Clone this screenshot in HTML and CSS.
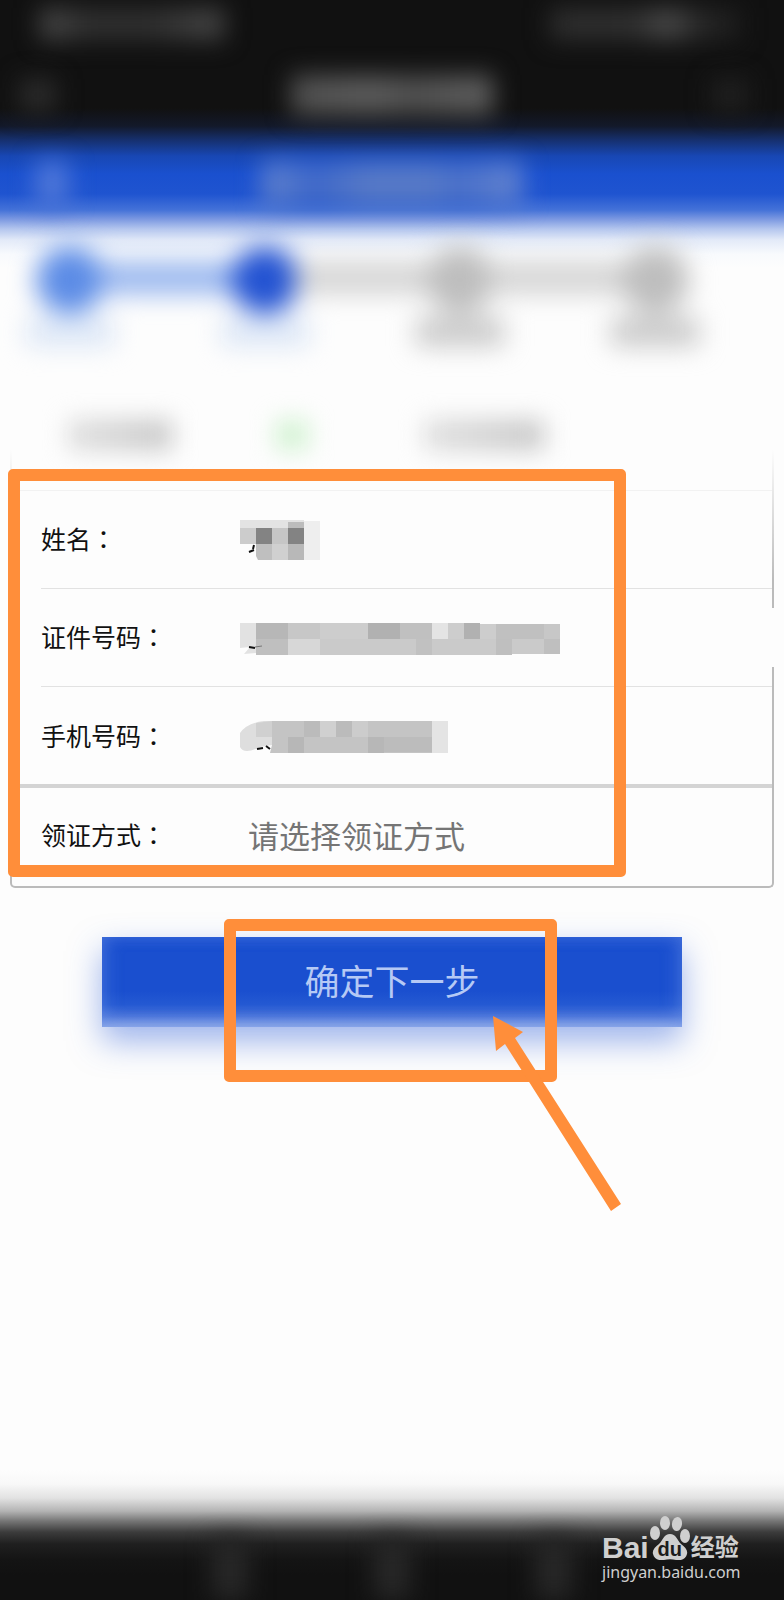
FILE: index.html
```html
<!DOCTYPE html>
<html lang="zh-CN">
<head>
    <meta charset="UTF-8">
    <meta name="viewport" content="width=device-width, initial-scale=1.0">
    <title>领证方式</title>
    <link rel="stylesheet" href="styles.css">
</head>
<body>
    <!-- Blurred header and steps -->
    <header class="top">
        <div class="bar status-bar">
            <span class="smudge clock"></span>
            <span class="smudge signal"></span>
        </div>
        <div class="bar nav-bar">
            <span class="smudge close"></span>
            <span class="smudge nav-title"></span>
            <span class="smudge more"></span>
        </div>
        <div class="bar page-bar">
            <span class="smudge back"></span>
            <span class="smudge page-title"></span>
            <span class="smudge spacer"></span>
        </div>
        <div class="steps">
            <div class="step done"><i class="dot"></i><i class="caption"></i></div>
            <div class="line done"></div>
            <div class="step current"><i class="dot"></i><i class="caption"></i></div>
            <div class="line"></div>
            <div class="step"><i class="dot"></i><i class="caption"></i></div>
            <div class="line"></div>
            <div class="step"><i class="dot"></i><i class="caption"></i></div>
        </div>
    </header>

    <form class="main">
        <div class="card">
            <div class="choices">
                <span class="choice"></span>
                <span class="check"></span>
                <span class="choice wide"></span>
            </div>
            <div class="row">
                <span class="label">姓名<span class="colon" lang="zh-TW">：</span></span>
                <svg class="mosaic" width="90" height="40" viewBox="0 0 90 40">
                    <path fill="#e3e3e3" d="M0 0h64v8H0z"/>
                    <path fill="#bcbcbc" d="M48 2h16v6H48z"/>
                    <path fill="#cccccc" d="M0 8h16v16H0z"/>
                    <path fill="#838383" d="M16 8h16v16H16zM48 8h16v16H48z"/>
                    <path fill="#c6c6c6" d="M32 8h16v16H32z"/>
                    <path fill="#bfbfbf" d="M16 24h16v16H18l-2-4z"/>
                    <path fill="#d0d0d0" d="M32 24h16v16H32z"/>
                    <path fill="#b8b8b8" d="M48 24h16v16H48z"/>
                    <path fill="#eeeeee" d="M64 1h16v39H64z"/>
                    <path fill="none" stroke="#111" stroke-width="2" d="M14 25l-1 4M9 32l5-2"/>
                </svg>
            </div>
            <div class="row">
                <span class="label">证件号码<span class="colon" lang="zh-TW">：</span></span>
                <svg class="mosaic" width="336" height="35" viewBox="0 -3 336 35">
                    <path fill="#e2e2e2" d="M0 0h16v30L4 31l6-7-10 1z"/>
                    <path fill="#b7b7b7" d="M16 0h32v16H16z"/>
                    <path fill="#c7c7c7" d="M48 0h32v16H48z"/>
                    <path fill="#cdcdcd" d="M80 0h48v16H80zM208 0h16v16h-16zM240 1h16v15h-16z"/>
                    <path fill="#b1b1b1" d="M128 0h32v16h-32zM224 0h16v16h-16z"/>
                    <path fill="#c0c0c0" d="M160 0h32v16h-32zM256 1h48v15h-48z"/>
                    <path fill="#e4e4e4" d="M192 0h16v16h-16z"/>
                    <path fill="#c7c7c7" d="M304 1h16v15h-16z"/>
                    <path fill="#bfbfbf" d="M16 16h32v16H16zM256 16h16v16h-16zM304 16h16v15h-16z"/>
                    <path fill="#d7d7d7" d="M48 16h32v16H48z"/>
                    <path fill="#cacaca" d="M80 16h176v16H80zM272 16h32v15h-32z"/>
                    <path fill="#c1c1c1" d="M176 16h16v16h-16z"/>
                    <path fill="none" stroke="#111" stroke-width="2" d="M9 24l6 1"/>
                    <path fill="none" stroke="#777" d="M15 24l7-1"/>
                </svg>
            </div>
            <div class="row thick">
                <span class="label">手机号码<span class="colon" lang="zh-TW">：</span></span>
                <svg class="mosaic" width="208" height="32" viewBox="0 0 208 32">
                    <path fill="#dedede" d="M0 12Q7 2 24 0h8v24l-12 2Q4 34 0 26z"/>
                    <path fill="#d0d0d0" d="M16 2l16-2v16H16z"/>
                    <path fill="#c4c4c4" d="M32 0h160v32H30l2-8z"/>
                    <path fill="#bbbbbb" d="M64 0h16v16H64zM96 0h16v16H96z"/>
                    <path fill="#d0d0d0" d="M80 0h16v16H80z"/>
                    <path fill="#b7b7b7" d="M48 16h16v16H48zM128 16h16v16h-16z"/>
                    <path fill="#cccccc" d="M112 0h16v16h-16z"/>
                    <path fill="#bcbcbc" d="M144 16h48v15h-48z"/>
                    <path fill="#e4e4e4" d="M192 0h16v32h-16z"/>
                    <path fill="none" stroke="#111" stroke-width="2" d="M17 28l6-1M26 25l4 3"/>
                </svg>
            </div>
            <div class="row">
                <label class="label" for="way">领证方式<span class="colon" lang="zh-TW">：</span></label>
                <input type="text" id="way" class="way" placeholder="请选择领证方式" readonly>
            </div>
            <span class="gap"></span>
            <span class="frame frame-form"></span>
        </div>

        <div class="actions">
            <button type="button" class="next-btn">确定下一步</button>
            <span class="frame frame-btn"></span>
            <svg class="arrow" width="128" height="195" viewBox="0 0 128 195">
                <path fill="#ff8e3a" d="M0 0l30 16-8 6 106 166-10 7L12 28l-9 7z"/>
            </svg>
        </div>
    </form>

    <footer class="bottom">
        <span class="key"></span>
        <span class="key"></span>
        <span class="key"></span>
        <div class="logo">
            <div class="brand">
                <span class="bai">Bai</span>
                <span class="paw">
                    <svg width="42" height="45" viewBox="0 0 42 45">
                        <g fill="currentColor">
                            <ellipse cx="6" cy="18" rx="5" ry="7"/>
                            <ellipse cx="16" cy="8" rx="5" ry="7"/>
                            <ellipse cx="28" cy="9" rx="5" ry="7" transform="rotate(8 28 9)"/>
                            <ellipse cx="36" cy="21" rx="5" ry="7"/>
                            <path d="M21 19c6 0 7 6 11 10 4 3 7 6 6 10-1 5-6 7-11 6-4-1-8-1-12 0-5 1-10-1-11-6-1-4 2-7 6-10 4-4 5-10 11-10z"/>
                        </g>
                    </svg>
                    <span class="du">du</span>
                </span>
                <span class="exp">经验</span>
            </div>
            <a class="site" href="#">jingyan.baidu.com</a>
        </div>
    </footer>
</body>
</html>
```

FILE: styles.css
```css
* {
    box-sizing: border-box;
}
body {
    font-family: "Noto Sans CJK SC", "Noto Sans", sans-serif;
    background-color: #fdfdfd;
    color: #111;
    margin: 0;
    min-height: 100vh;
    display: flex;
    flex-direction: column;
    overflow-x: hidden;
}

/* header */
.top {
    background: linear-gradient(#111 0, #111 108px, #13192a 126px, #16306e 140px, #1847b4 156px, #1a50cf 174px, #1f54d0 194px, #4472d8 210px, #7b98e1 219px, #b4c6ee 229px, #e3eaf8 240px, #f8fafd 254px, #fdfdfd 268px);
}
.bar {
    display: flex;
    justify-content: space-between;
    align-items: center;
}
.smudge {
    height: 32px;
    filter: blur(12px);
}
.status-bar {
    height: 48px;
    padding: 0 44px 0 40px;
}
.clock {
    width: 184px;
    background: linear-gradient(90deg, #4c4c4c, #303030 25%, #303030 60%, #484848);
}
.signal {
    width: 190px;
    background: linear-gradient(90deg, #2e2e2e, #303030 45%, #4c4c4c 62%, #262626 80%, #1e1e1e);
}
.nav-bar {
    height: 90px;
    padding: 4px 36px 0 20px;
}
.close, .more {
    width: 36px;
    background-color: #2c2c2c;
}
.more {
    background-color: #202020;
}
.nav-title {
    width: 202px;
    height: 40px;
    margin-left: 16px;
    background: linear-gradient(90deg, #505050, #5c5c5c 40%, #505050 60%, #606060);
}
.page-bar {
    height: 84px;
    padding: 8px 36px 0;
}
.back, .spacer {
    width: 32px;
    height: 44px;
    background-color: #5078d8;
}
.spacer {
    background: none;
}
.page-title {
    width: 260px;
    height: 44px;
    background: linear-gradient(90deg, #6484cc, #3f68c8 20%, #587ac6 40%, #587ac6 65%, #4a70c8 75%, #6484cf);
}

/* steps */
.steps {
    display: flex;
    height: 158px;
    padding: 24px 99px 0 40px;
    filter: blur(13px);
}
.step {
    width: 60px;
    display: flex;
    flex-direction: column;
    align-items: center;
    gap: 4px;
}
.dot {
    width: 68px;
    height: 68px;
    flex: none;
    border-radius: 50%;
    background-color: #bebebe;
}
.caption {
    width: 88px;
    height: 28px;
    background-color: #c8c8c8;
}
.done .dot {
    background-color: #5c8ce6;
}
.current .dot {
    background-color: #2353d2;
}
.done .caption, .current .caption {
    background-color: #dbe6f6;
}
.line {
    flex: 1;
    height: 32px;
    margin-top: 16px;
    background-color: #d4d4d4;
}
.line.done {
    background-color: #98b6ee;
}

/* form */
.main {
    flex: 1;
}
.card {
    position: relative;
    margin: 0 10px;
    border: 2px solid #bbb;
    border-top: none;
    border-radius: 5px;
}
.card::before {
    content: "";
    position: absolute;
    top: 0;
    left: -2px;
    right: -2px;
    height: 200px;
    background: linear-gradient(#fdfdfd 35%, rgba(253, 253, 253, 0));
}
.choices {
    position: relative;
    display: flex;
    align-items: center;
    height: 111px;
    padding-left: 56px;
    border-bottom: 1px solid #f2f2f2;
}
.choice, .check {
    width: 104px;
    height: 30px;
    background: linear-gradient(90deg, #dedede, #c4c4c4);
    filter: blur(12px);
}
.check {
    width: 32px;
    margin: 0 116px 0 104px;
    background: #d0f2d0;
}
.choice.wide {
    width: 120px;
}
.row {
    position: relative;
    display: flex;
    align-items: center;
    height: 98px;
    margin-left: 29px;
    border-bottom: 1px solid #e2e2e2;
}
.row.thick {
    height: 99px;
    border-bottom: none;
}
.row.thick::after {
    content: "";
    position: absolute;
    left: -29px;
    right: 0;
    bottom: -2px;
    height: 4px;
    background-color: #d4d4d4;
}
.row:nth-child(5) {
    height: 100px;
    border-bottom: none;
}
.label {
    width: 199px;
    padding-bottom: 4px;
    font-size: 25px;
    line-height: 36px;
}
.colon {
    font-family: "Noto Sans CJK TC", sans-serif;
}
.way {
    flex: 1;
    width: 0;
    padding: 0 8px 2px;
    border: none;
    background: none;
    color: #757575;
    font-family: inherit;
    font-size: 31px;
    line-height: 44px;
    outline: none;
}
.way::placeholder {
    color: #757575;
}
.gap {
    position: absolute;
    right: -3px;
    top: 228px;
    width: 4px;
    height: 59px;
    background-color: #fdfdfd;
}

/* orange marks */
.frame {
    position: absolute;
    border: 12px solid #ff8e3a;
    border-radius: 5px;
    pointer-events: none;
}
.frame-form {
    top: 89px;
    bottom: 9px;
    left: -4px;
    width: 618px;
}
.actions {
    position: relative;
    width: 580px;
    max-width: 90%;
    margin: 49px auto 0;
}
.next-btn {
    display: block;
    width: 100%;
    height: 90px;
    padding: 0 0 4px;
    border: none;
    background: linear-gradient(#1a4fcf 60%, #2459d2 75%, #4a74da 88%, #8fa9e7);
    box-shadow: 0 14px 32px rgba(60, 105, 220, 0.5), inset 6px -2px 16px rgba(120, 155, 235, 0.3), inset -6px -2px 16px rgba(120, 155, 235, 0.3);
    color: #b5c9f5;
    font-family: inherit;
    font-size: 35px;
    line-height: 50px;
}
.frame-btn {
    top: -18px;
    left: 122px;
    width: 333px;
    height: 163px;
}
.arrow {
    position: absolute;
    top: 79px;
    left: 391px;
}

/* bottom bar */
.bottom {
    position: relative;
    display: flex;
    justify-content: center;
    align-items: flex-end;
    gap: 126px;
    height: 130px;
    background: linear-gradient(#fdfdfd 0, #f8f8f8 14px, #e2e2e2 28px, #b4b4b4 41px, #767676 51px, #3c3c3c 62px, #1f1f1f 74px, #141414 90px, #111 105px);
    overflow: hidden;
}
.key {
    width: 36px;
    height: 60px;
    background-color: #282828;
    filter: blur(12px);
}
.logo {
    position: absolute;
    right: 42px;
    bottom: 16px;
    width: 140px;
    color: #cfcfcf;
}
.brand {
    display: flex;
    align-items: flex-end;
    height: 45px;
    font-weight: bold;
}
.bai {
    font-family: "Liberation Sans", sans-serif;
    font-size: 30px;
    line-height: 28px;
    height: 26px;
}
.paw {
    position: relative;
    width: 42px;
    height: 45px;
}
.du {
    position: absolute;
    left: 0;
    right: 0;
    bottom: 1px;
    text-align: center;
    color: #1c1c1c;
    font-family: "Liberation Sans", sans-serif;
    font-size: 20px;
    line-height: 20px;
}
.exp {
    font-size: 24px;
    line-height: 24px;
    height: 26px;
}
.site {
    display: block;
    color: inherit;
    font-family: "Noto Sans", sans-serif;
    font-size: 16px;
    line-height: 24px;
    text-decoration: none;
}
```
